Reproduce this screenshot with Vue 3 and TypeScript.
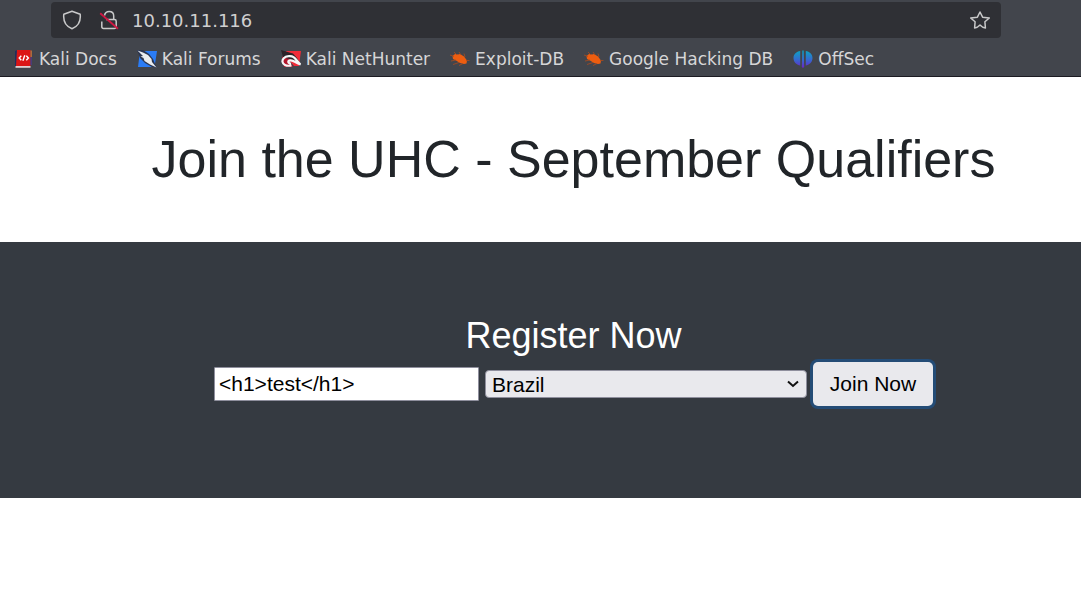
<script setup lang="ts">
import { ref } from 'vue'

type IconName = 'docs' | 'forums' | 'nethunter' | 'bug' | 'offsec'

interface Bookmark {
  label: string
  icon: IconName
}

const bookmarks: Bookmark[] = [
  { label: 'Kali Docs', icon: 'docs' },
  { label: 'Kali Forums', icon: 'forums' },
  { label: 'Kali NetHunter', icon: 'nethunter' },
  { label: 'Exploit-DB', icon: 'bug' },
  { label: 'Google Hacking DB', icon: 'bug' },
  { label: 'OffSec', icon: 'offsec' },
]

const address = ref('10.10.11.116')
const username = ref('<h1>test</h1>')
const country = ref('Brazil')
</script>

<template>
  <div class="browser">
    <header class="chrome">
      <div class="urlbar">
        <svg class="shield" viewBox="0 0 20 20" aria-hidden="true">
          <path d="M10 1.2 L18.2 4.3 C19 12 16 16.5 10 18.8 C4 16.5 1 12 1.8 4.3 Z" />
        </svg>
        <svg class="lock" viewBox="0 0 20 20" aria-hidden="true">
          <path d="M5.5 5.5 C6 2.8 8 1.5 10.2 1.5 C13 1.5 14.7 3.5 14.7 6 V9.5 M7 9.5 H15.5 Q17.2 9.5 17.2 11.2 V16.8 Q17.2 18.5 15.5 18.5 H4.5 Q2.8 18.5 2.8 16.8 V11.5" />
          <path class="slash" d="M1.2 3.2 L19 18.8" />
        </svg>
        <input v-model="address" class="address" type="text" aria-label="Address" />
        <button class="star" type="button" aria-label="Bookmark this page">
          <svg viewBox="0 0 22 20" aria-hidden="true">
            <path d="M11 2 L13.6 7.2 L20.3 8 L15.9 11.8 L16.4 18 Q13.5 17.6 11 15 Q8.5 17.6 5.6 18 L6.1 11.8 L1.7 8 L8.4 7.2 Z" />
          </svg>
        </button>
      </div>
      <nav class="bookmarks" aria-label="Bookmarks">
        <a v-for="item in bookmarks" :key="item.label" href="#" class="bookmark">
          <svg v-if="item.icon === 'docs'" viewBox="0 0 20 20" aria-hidden="true">
            <path d="M1 2 L4 1 V17 L1 18 Z" fill="#20305e" />
            <path d="M3 1 H16.5 V17 H2 Z" fill="#dc1515" />
            <path d="M16.5 1.5 H17.8 V8 H16.5 Z" fill="#c8743c" />
            <path d="M16.5 8 H17.8 V16 H16.5 Z" fill="#4b3c86" />
            <path d="M1.5 17 H16.5 V18.8 H1.5 Z" fill="#e0cfd0" />
            <path d="M7.3 6.8 L5.2 9 L7.3 11.2 M12.3 6.8 L14.4 9 L12.3 11.2 M10.8 6.2 L8.9 11.8" fill="none" stroke="#fff" stroke-width="1.4" />
          </svg>
          <svg v-else-if="item.icon === 'forums'" viewBox="0 0 20 20" aria-hidden="true">
            <path d="M3 2 H20 L17.5 18 H1 Z" fill="#2a7cf6" />
            <path d="M0 1 L6 1 L12 5 L16 10 L19.5 18.5 L15 18 L8 14 L3 9 Z" fill="#2b3550" />
            <path d="M0.5 1.5 L6 3.5 L11 6 L14.5 10 L15 13 L19.5 18.5 L13 15.5 L7.5 12 L6.5 9 L3.5 7.5 L6 7 Z" fill="#e9ecef" />
          </svg>
          <svg v-else-if="item.icon === 'nethunter'" viewBox="0 0 20 20" aria-hidden="true">
            <path d="M5 2 H20 L18 17 H13 L7 10 Z" fill="#f02b38" />
            <path d="M1 8 L5 6 L12 18 H3 Z" fill="#b3172d" />
            <path d="M0 1 L5 2.5 L12 4.5 L16 9 L19 14 L11 11 L2 8 Z" fill="#2b2228" />
            <path d="M10.5 16.5 C-1 18.5 -1 8 7.5 7.2 C14 6.4 14.5 11 19.5 15.5 C14.5 14 13 11 9.5 11.3 C6.5 11.6 6.5 14.2 10 14.8" fill="none" stroke="#f6f6f6" stroke-width="2.2" />
          </svg>
          <svg v-else-if="item.icon === 'bug'" viewBox="0 0 20 20" aria-hidden="true">
            <path d="M2.5 7 L5 5 L8 5.5 L10 5 L14 7.5 L17 11.5 L16.5 14.5 L14 15 L10 14 L6 11.5 L3 10 Z" fill="#ed5d10" />
            <path d="M0 6 L4 7.5 M4 3 L7 6 M9 3 L11 6 M14 4.5 L15 8 M16 11.5 H19.5 M1 12 L6 11 M3 15.5 L9 13.5 M9 16.5 L13 14.5" stroke="#a94b20" stroke-width="0.8" fill="none" />
          </svg>
          <svg v-else viewBox="0 0 20 20" aria-hidden="true">
            <defs>
              <linearGradient id="offsec-fill" x1="0" y1="1" x2="0" y2="19" gradientUnits="userSpaceOnUse">
                <stop offset="0" stop-color="#08a9c2" />
                <stop offset="0.55" stop-color="#3668cf" />
                <stop offset="1" stop-color="#6a22c8" />
              </linearGradient>
            </defs>
            <path d="M7.2 2 V16.5 C4 16 0.5 13.5 0.5 9 C0.5 5 3.5 2.5 7.2 2 Z M12.8 2 C16.5 2.5 19.5 5 19.5 9 C19.5 13.5 16 16 12.8 16.5 Z M9.3 1.5 H10.7 L11.2 18 L10 19 L8.8 18 Z" fill="url(#offsec-fill)" />
          </svg>
          <span>{{ item.label }}</span>
        </a>
      </nav>
    </header>

    <main>
      <section class="hero">
        <h1>Join the UHC - September Qualifiers</h1>
      </section>
      <section class="register">
        <h2>Register Now</h2>
        <form class="form" @submit.prevent>
          <input v-model="username" class="name" type="text" aria-label="Username" />
          <div class="picker">
            <select v-model="country" aria-label="Country">
              <option>Brazil</option>
            </select>
            <svg class="chevron" viewBox="0 0 12 8" aria-hidden="true">
              <path d="M1 1.5 L6 6 L11 1.5" />
            </svg>
          </div>
          <button class="join" type="submit">Join Now</button>
        </form>
      </section>
    </main>
  </div>
</template>

<style>
body {
  margin: 0;
  background: #fff;
}
</style>

<style scoped>
* {
  box-sizing: border-box;
}

.browser {
  font-family: "Liberation Sans", Arial, sans-serif;
}

.chrome {
  background: #42454c;
  border-bottom: 1px solid #1c1b22;
  padding-top: 2px;
  font-family: "DejaVu Sans", sans-serif;
}

.urlbar {
  display: flex;
  align-items: center;
  height: 36px;
  margin: 0 80px 0 51px;
  padding: 0 10px 0 11px;
  border-radius: 4px;
  background: #2f3035;
}

.urlbar svg {
  flex: none;
  width: 20px;
  height: 20px;
  fill: none;
  stroke: #c9c9ca;
  stroke-width: 1.5;
  stroke-linejoin: round;
}

.urlbar .lock {
  margin-left: 17px;
}

.urlbar .slash {
  stroke: #cf1742;
  stroke-width: 1.8;
}

.address {
  flex: 1;
  min-width: 0;
  margin-left: 13px;
  padding: 0;
  border: 0;
  outline: 0;
  background: transparent;
  color: #cfcfd0;
  font: 18px "DejaVu Sans", sans-serif;
}

.star {
  display: flex;
  padding: 0;
  border: 0;
  background: transparent;
}

.urlbar .star svg {
  width: 22px;
}

.bookmarks {
  display: flex;
  align-items: center;
  gap: 20px;
  height: 38px;
  padding: 4px 14px 0;
}

.bookmark {
  display: flex;
  align-items: center;
  gap: 5px;
  color: #d6d6d7;
  font-size: 17px;
  line-height: 20px;
  white-space: nowrap;
  text-decoration: none;
}

.bookmark svg {
  flex: none;
  width: 20px;
  height: 20px;
}

.hero,
.register {
  padding-left: 66px;
  text-align: center;
}

.hero {
  padding-top: 50px;
  padding-bottom: 51px;
}

h1 {
  margin: 0;
  color: #212529;
  font-size: 52px;
  font-weight: 400;
  line-height: 64px;
}

.register {
  padding-top: 74px;
  padding-bottom: 92px;
  background: #353a41;
}

h2 {
  margin: 0 0 6px;
  color: #fff;
  font-size: 36px;
  font-weight: 400;
  line-height: 40px;
}

.form {
  display: flex;
  align-items: center;
  justify-content: center;
  gap: 6px;
}

.name,
.picker select,
.join {
  color: #000;
  font: 21px "Liberation Sans", Arial, sans-serif;
}

.name {
  width: 265px;
  height: 34px;
  padding: 0 4px;
  border: 1px solid #8f8f9d;
  border-radius: 1px;
  background: #fff;
}

.picker {
  position: relative;
  width: 322px;
}

.picker select {
  display: block;
  width: 100%;
  height: 28px;
  padding: 0 28px 0 6px;
  border: 1px solid #8f8f9d;
  border-radius: 4px;
  background: #e9e9ed;
  appearance: none;
}

.chevron {
  position: absolute;
  top: 10px;
  right: 8px;
  width: 12px;
  height: 8px;
  fill: none;
  stroke: #111;
  stroke-width: 2;
  pointer-events: none;
}

.join {
  width: 120px;
  height: 44px;
  padding: 0;
  border: 0;
  border-radius: 5px;
  background: #e9e9ed;
  box-shadow: 0 0 0 3px #244c76;
}
</style>
